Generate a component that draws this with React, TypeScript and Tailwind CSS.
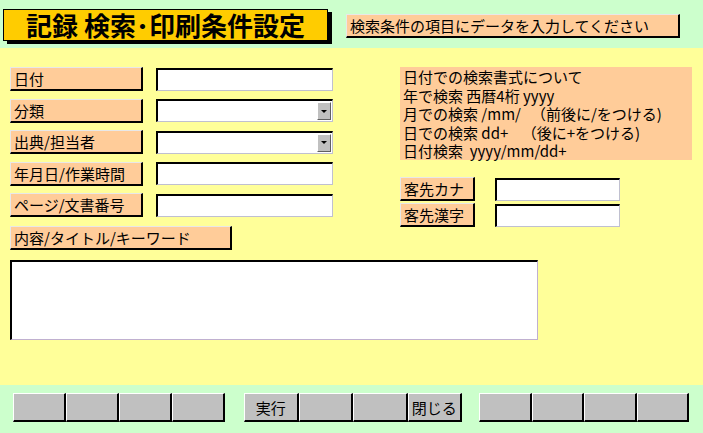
import React from 'react';

const font = { fontFamily: '"Noto Sans CJK JP", "Liberation Sans", sans-serif' };

// 浮き上がったラベル（Access風）
function Label({ text, w = 'w-[133px]' }: { text: string; w?: string }) {
  return (
    <div
      className={`${w} h-[24px] bg-[#ffcc99] border-t border-l border-t-[#e8e8e8] border-l-[#e8e8e8] border-b-2 border-r-2 border-b-black border-r-black pl-[3px] flex items-center text-[15px] leading-none text-black whitespace-nowrap`}
    >
      {text}
    </div>
  );
}

// くぼんだ入力欄
function Field({ w = 'w-[177px]', combo = false }: { w?: string; combo?: boolean }) {
  return (
    <div
      className={`${w} h-[23px] bg-white border-t-2 border-l-2 border-t-black border-l-black border-b border-r border-b-[#c0c0d0] border-r-[#c0c0d0] flex justify-end items-center pr-[1px]`}
    >
      {combo && (
        <div className="w-[14px] h-[18px] bg-[#c0c0c0] border-t border-l border-white border-b border-r border-b-[#606060] border-r-[#606060] flex items-center justify-center">
          <div className="w-0 h-0 border-l-[3px] border-r-[3px] border-t-[3px] border-l-transparent border-r-transparent border-t-black" />
        </div>
      )}
    </div>
  );
}

function Btn({ text, w = 'w-[53px]' }: { text?: string; w?: string }) {
  return (
    <div className={`${w} h-[29px] bg-[#c0c0c0] border-t border-l border-t-white border-l-white border-b-2 border-r-2 border-b-black border-r-black flex items-center justify-center text-[15px] text-black leading-none`}>
      {text}
    </div>
  );
}

const rows: { label: string; combo?: boolean }[] = [
  { label: '日付' },
  { label: '分類', combo: true },
  { label: '出典/担当者', combo: true },
  { label: '年月日/作業時間' },
  { label: 'ページ/文書番号' },
];

const info = [
  '日付での検索書式について',
  '年で検索 西暦4桁 yyyy',
  '月での検索 /mm/   （前後に/をつける)',
  '日での検索 dd+    （後に+をつける)',
  '日付検索  yyyy/mm/dd+',
];

export default function App() {
  return (
    <div className="w-[703px] h-[433px] flex flex-col overflow-hidden" style={font}>
      {/* ヘッダー */}
      <div className="h-[48px] bg-[#ccffcc] flex items-start pl-[3px]">
        <div className="mt-[9px] w-[325px] h-[32px] bg-[#ffcc00] border border-black shadow-[4px_3px_0_#000] flex items-center justify-center text-[26px] font-bold leading-none text-black">
          記録 検索･印刷条件設定
        </div>
        <div className="ml-[18px] mt-[14px] w-[334px] h-[24px] bg-[#ffcc99] border-t border-l border-t-[#e8e8e8] border-l-[#e8e8e8] border-b-2 border-r-2 border-b-black border-r-black pl-[3px] flex items-center text-[15px] leading-none text-black whitespace-nowrap">
          検索条件の項目にデータを入力してください
        </div>
      </div>

      {/* メイン */}
      <div className="flex-1 bg-[#ffff99] pl-[10px] pt-[19px]">
        <div className="flex items-start">
          <div className="w-[390px] flex flex-col gap-[7.5px]">
            {rows.map((r) => (
              <div key={r.label} className="flex items-center gap-[13px]">
                <Label text={r.label} />
                <Field combo={r.combo} />
              </div>
            ))}
            <div className="mt-[1px]">
              <Label text="内容/タイトル/キーワード" w="w-[222px]" />
            </div>
          </div>
          <div className="flex flex-col">
            <div className="w-[292px] h-[93px] bg-[#ffcc99] pl-[3px] pt-[1px] text-[15px] leading-[18.5px] text-black whitespace-pre">
              {info.map((l) => (
                <div key={l}>{l}</div>
              ))}
            </div>
            <div className="mt-[17px] flex flex-col gap-[2px]">
              {['客先カナ', '客先漢字'].map((l) => (
                <div key={l} className="flex items-center gap-[20px]">
                  <Label text={l} w="w-[75px]" />
                  <Field w="w-[125px]" />
                </div>
              ))}
            </div>
          </div>
        </div>
        <div className="mt-[10px] w-[528px] h-[80px] bg-white border-t-2 border-l-2 border-t-black border-l-black border-b border-r border-b-[#c0b0d0] border-r-[#c0b0d0]" />
      </div>

      {/* フッター */}
      <div className="h-[48px] bg-[#ccffcc] flex items-start pt-[8px] pl-[13px]">
        <div className="flex">
          <Btn />
          <Btn />
          <Btn />
          <Btn />
        </div>
        <div className="flex ml-[19px]">
          <Btn text="実行" w="w-[54.5px]" />
          <Btn w="w-[54.5px]" />
          <Btn w="w-[54.5px]" />
          <Btn text="閉じる" w="w-[54.5px]" />
        </div>
        <div className="flex ml-[17px]">
          <Btn w="w-[52.5px]" />
          <Btn w="w-[52.5px]" />
          <Btn w="w-[52.5px]" />
          <Btn w="w-[52.5px]" />
        </div>
      </div>
    </div>
  );
}
